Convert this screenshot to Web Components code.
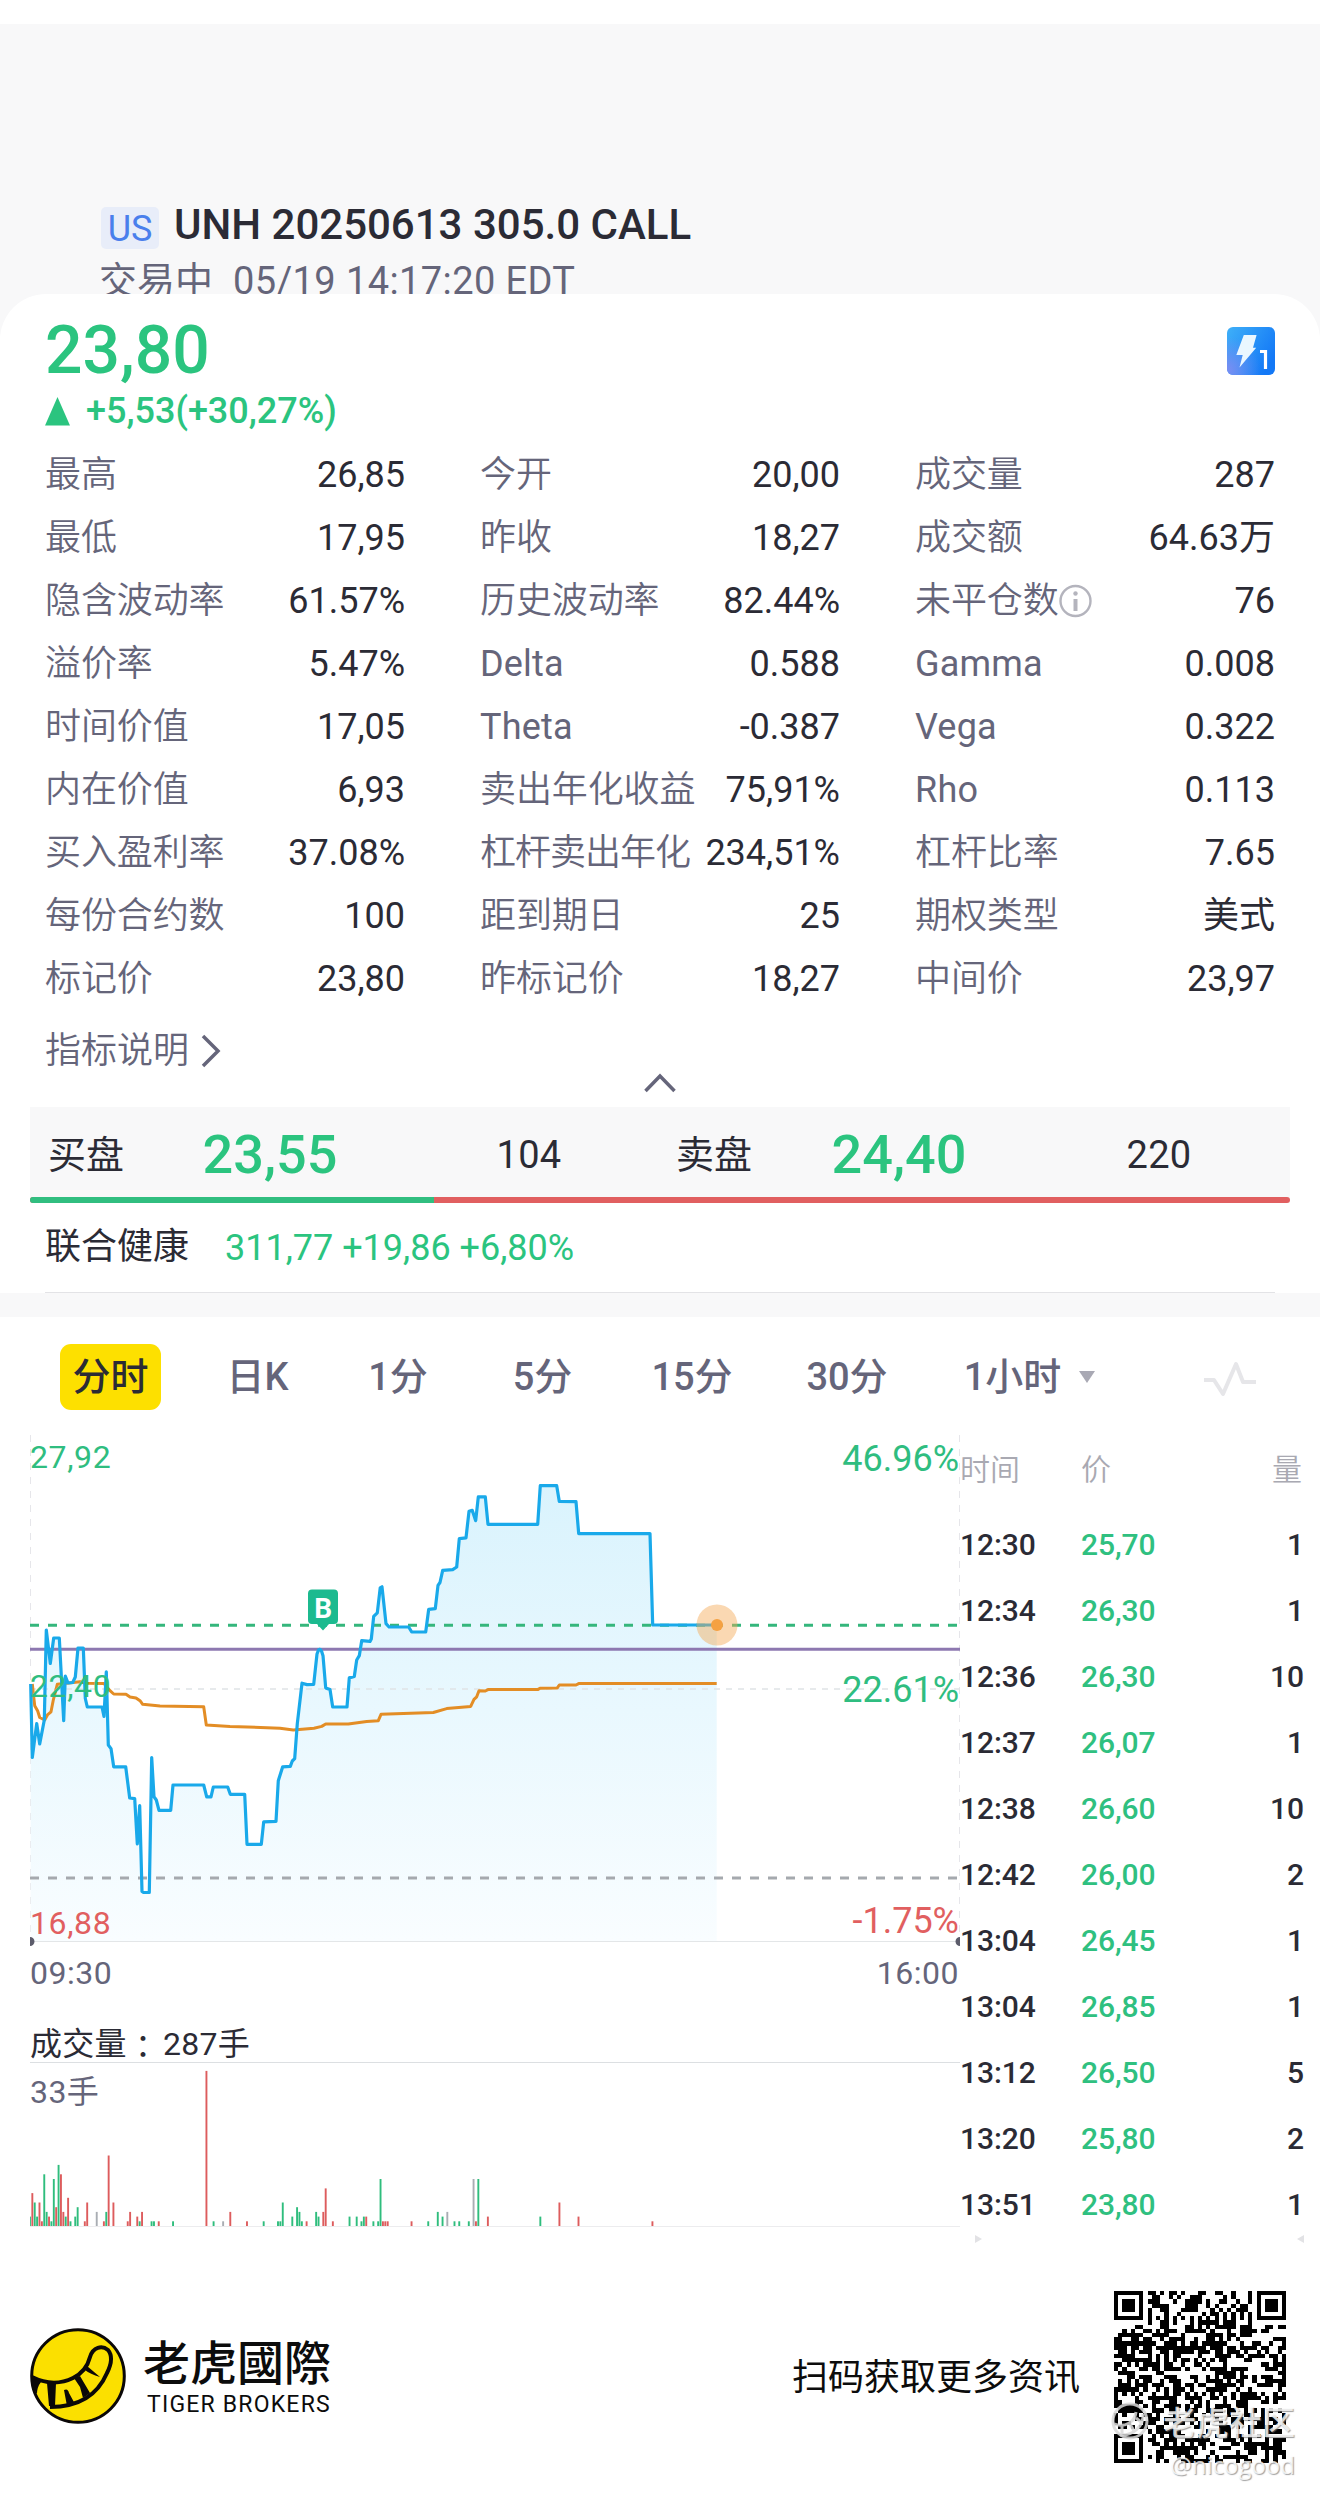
<!DOCTYPE html>
<html lang="zh-CN">
<head>
<meta charset="UTF-8">
<title>UNH 20250613 305.0 CALL</title>
<style>
    body {
        margin: 0;
        background: #fff;
        color: #2b2b35;
        font-family: Roboto, "Noto Sans CJK SC", sans-serif;
        --green: #2bc47f;
        --red: #e15f60;
        --muted: #65657a;
        --panel: #f8f8f9;
    }
</style>
</head>
<body>
<option-page>
    <contract-header slot="header" market="US" name="UNH 20250613 305.0 CALL" status="交易中" time="05/19 14:17:20 EDT"></contract-header>
    <quote-summary price="23,80" change="+5,53(+30,27%)"></quote-summary>
    <stat-grid></stat-grid>
    <bid-ask bid="23,55" bid-size="104" ask="24,40" ask-size="220"></bid-ask>
    <underlying-row name="联合健康">311,77 +19,86 +6,80%</underlying-row>
    <period-tabs></period-tabs>
    <market-board>
        <intraday-chart></intraday-chart>
        <volume-chart></volume-chart>
        <trade-tape slot="side"></trade-tape>
    </market-board>
    <brand-footer>扫码获取更多资讯</brand-footer>
</option-page>

<script>
// Small base class: every component renders a string into its shadow root
class BaseElement extends HTMLElement {
    constructor() {
        super();
        this.attachShadow({ mode: 'open' });
        this.shadowRoot.innerHTML = this.render();
    }
}

// Page shell
class OptionPage extends BaseElement {
    render() {
        return `
            <style>
                :host { display: flex; flex-direction: column; width: 1320px; height: 2496px; overflow: hidden; }
                .top { margin-top: 24px; background: var(--panel); }
                .card { height: 46px; margin-bottom: -46px; border-radius: 46px 46px 0 0; background: #fff; }
            </style>
            <div class="top">
                <slot name="header"></slot>
                <div class="card"></div>
            </div>
            <slot></slot>
        `;
    }
}

// Market badge, contract name and trading status
class ContractHeader extends BaseElement {
    render() {
        return `
            <style>
                :host { display: block; height: 270px; overflow: hidden; background: var(--panel); box-shadow: 0 46px 0 var(--panel); }
                .title { display: flex; align-items: center; gap: 15px; height: 50px; padding: 176px 0 0 101px; }
                .badge { width: 58px; height: 42px; margin-top: 6px; border-radius: 5px; background: #e8edf9; color: #4a7fec; font-size: 36px; line-height: 45px; text-align: center; }
                .name { font-size: 42px; font-weight: 500; line-height: 50px; }
                .status { display: flex; gap: 20px; margin-top: 6px; padding-left: 99px; font-size: 38px; line-height: 50px; color: var(--muted); }
                .status span + span { letter-spacing: 0.400px; }
            </style>
            <div class="title">
                <span class="badge">${this.getAttribute('market')}</span>
                <span class="name">${this.getAttribute('name')}</span>
            </div>
            <div class="status">
                <span>${this.getAttribute('status')}</span>
                <span>${this.getAttribute('time')}</span>
            </div>
        `;
    }
}

// Last price and daily change
class QuoteSummary extends BaseElement {
    render() {
        return `
            <style>
                :host { display: flex; justify-content: space-between; height: 148px; padding: 0 45px 0 45px; position: relative; color: var(--green); font-weight: 500; }
                .price { margin-top: 17px; font-size: 66px; line-height: 80px; }
                .change { display: flex; align-items: center; gap: 16px; height: 40px; font-size: 36px; }
                .flash { margin-top: 33px; }
            </style>
            <div>
                <div class="price">${this.getAttribute('price')}</div>
                <div class="change">
                    <svg width="25" height="29" viewBox="0 0 25 29"><path d="M12.5 0 25 28.500H0z" fill="#2bc47f"/></svg>
                    <span>${this.getAttribute('change')}</span>
                </div>
            </div>
            <svg class="flash" width="48" height="48" viewBox="0 0 48 48">
                <defs>
                    <linearGradient id="sky" x1="0" y1="0" x2="1" y2=".6">
                        <stop offset="0" stop-color="#3fb0f8"/>
                        <stop offset="1" stop-color="#1378f6"/>
                    </linearGradient>
                    <radialGradient id="violet" cx="0" cy=".9" r=".7">
                        <stop offset="0" stop-color="#7b8df2"/>
                        <stop offset="1" stop-color="#7b8df2" stop-opacity="0"/>
                    </radialGradient>
                </defs>
                <rect width="48" height="48" rx="6" fill="url(#sky)"/>
                <rect width="48" height="48" rx="6" fill="url(#violet)"/>
                <path d="M16.800 8H29.600L26 20.700h3.200L12.500 40.500 15.700 28H9.300z" fill="#eaf7ff"/>
                <path d="M33 24.500h5.500V42" fill="none" stroke="#fff" stroke-width="3.200"/>
            </svg>
        `;
    }
}

// One label / value pair; the info flag adds the round hint icon
class StatItem extends BaseElement {
    render() {
        const label = this.getAttribute('label');
        const info = this.hasAttribute('info')
            ? `<svg width="33" height="36" viewBox="0 0 33 36"><circle cx="16.500" cy="18" r="15" fill="none" stroke="#b4b4bd" stroke-width="2.400"/><path d="M16.500 16v12" stroke="#b4b4bd" stroke-width="4"/><circle cx="16.500" cy="10.500" r="2.200" fill="#b4b4bd"/></svg>`
            : '';
        return `
            <style>
                :host { display: flex; justify-content: space-between; align-items: center; height: 63px; font-size: 36px; line-height: 50px; white-space: nowrap; }
                .label { display: flex; align-items: center; color: var(--muted); font-weight: 350; letter-spacing: var(--label-spacing, -0.1px); }
                .latin { font-weight: 400; letter-spacing: 0.200px; }
            </style>
            <span class="label ${/^\w/.test(label) ? 'latin' : ''}">${label}${info}</span>
            <slot></slot>
        `;
    }
}

const STATS = [
    ['最高', '26,85'], ['今开', '20,00'], ['成交量', '287'],
    ['最低', '17,95'], ['昨收', '18,27'], ['成交额', '64.63万'],
    ['隐含波动率', '61.57%'], ['历史波动率', '82.44%'], ['未平仓数', '76', 'info'],
    ['溢价率', '5.47%'], ['Delta', '0.588'], ['Gamma', '0.008'],
    ['时间价值', '17,05'], ['Theta', '-0.387'], ['Vega', '0.322'],
    ['内在价值', '6,93'], ['卖出年化收益', '75,91%'], ['Rho', '0.113'],
    ['买入盈利率', '37.08%'], ['杠杆卖出年化', '234,51%', 'style="--label-spacing:-1px"'], ['杠杆比率', '7.65'],
    ['每份合约数', '100'], ['距到期日', '25'], ['期权类型', '美式', 'style="font-weight:380"'],
    ['标记价', '23,80'], ['昨标记价', '18,27'], ['中间价', '23,97']
];

class StatGrid extends BaseElement {
    render() {
        const items = STATS.map(([label, value, extra = '']) =>
            `<stat-item label="${label}" ${extra}>${value}</stat-item>`).join('');
        return `
            <style>
                :host { display: block; height: 665px; }
                .grid { display: grid; grid-template-columns: repeat(3, 360px); column-gap: 75px; padding: 1px 45px 0; }
                .more { display: flex; align-items: center; gap: 12px; height: 50px; margin: 16px 0 0 45px; font-size: 36px; line-height: 50px; color: var(--muted); font-weight: 350; }
                .fold { display: block; margin: -3px auto 0; }
            </style>
            <div class="grid">${items}</div>
            <div class="more">
                <span>指标说明</span>
                <svg width="20" height="34" viewBox="0 0 20 34"><path d="M2 2 17 17 2 32" fill="none" stroke="#65657a" stroke-width="3.500"/></svg>
            </div>
            <svg class="fold" width="32" height="20" viewBox="0 0 32 20"><path d="M1.500 18 16 3 30.500 18" fill="none" stroke="#65657a" stroke-width="3.500"/></svg>
        `;
    }
}

// Best bid / ask with the depth ratio line underneath
class BidAsk extends BaseElement {
    render() {
        const side = (label, price, size) => `
            <span class="label">${label}</span>
            <span class="price">${price}</span>
            <span>${size}</span>`;
        return `
            <style>
                :host { display: block; height: 96px; margin: 0 30px; background: var(--panel); }
                .row { display: grid; grid-template-columns: 110px 260px 258px 110px 262px 258px; align-items: center; box-sizing: border-box; height: 90px; padding-top: 5px; text-align: center; font-size: 38px; line-height: 56px; letter-spacing: 0.300px; }
                .label { padding-left: 18px; text-align: left; letter-spacing: 0; }
                .price { color: var(--green); font-size: 54px; font-weight: 500; letter-spacing: 0; }
                .ratio { display: flex; height: 6px; border-radius: 3px; overflow: hidden; background: var(--red); }
                .ratio i { width: 404px; background: #31be80; }
            </style>
            <div class="row">
                ${side('买盘', this.getAttribute('bid'), this.getAttribute('bid-size'))}
                ${side('卖盘', this.getAttribute('ask'), this.getAttribute('ask-size'))}
            </div>
            <div class="ratio"><i></i></div>
        `;
    }
}

class UnderlyingRow extends BaseElement {
    render() {
        return `
            <style>
                :host { display: block; border-bottom: 24px solid var(--panel); }
                .row { display: flex; align-items: center; gap: 36px; height: 89px; margin: 0 45px; border-bottom: 1px solid #e3e3e6; font-size: 36px; line-height: 50px; }
                .name { margin-top: -2px; }
                .quote { color: var(--green); }
            </style>
            <div class="row">
                <span class="name">${this.getAttribute('name')}</span>
                <span class="quote"><slot></slot></span>
            </div>
        `;
    }
}

// Chart period switcher
class PeriodTabs extends BaseElement {
    render() {
        const tabs = ['分时', '日K', '1分', '5分', '15分', '30分', '1小时'];
        return `
            <style>
                :host { display: grid; grid-template-columns: 101px 193px 88px 201px 98px 212px 119px 30px 1fr; align-items: center; height: 66px; padding: 27px 63px 22px 60px; font-size: 38px; font-weight: 500; line-height: 66px; text-align: center; color: var(--muted); white-space: nowrap; }
                .active { border-radius: 11px; background: #fde000; color: #2b2b35; }
                svg { justify-self: end; }
                svg:last-child { margin-top: 4px; }
            </style>
            ${tabs.map((tab, i) => `<span class="${i ? '' : 'active'}">${tab}</span>`).join('')}
            <svg width="23" height="12" viewBox="0 0 23 12"><path d="M0 0H16L8 12z" fill="#a9a9b4"/></svg>
            <svg width="54" height="38" viewBox="0 0 54 38"><path d="M1 20H11L20 34 33 4 40 22H53" fill="none" stroke="#e6e6e9" stroke-width="4" stroke-linejoin="round"/></svg>
        `;
    }
}

class MarketBoard extends BaseElement {
    render() {
        return `
            <style>
                :host { display: grid; grid-template-columns: 960px 1fr; height: 818px; }
            </style>
            <div><slot></slot></div>
            <slot name="side"></slot>
        `;
    }
}

// Price line, average line and reference levels, in drawing units of one pixel
const PRICE = '30.7,264 32.3,337.5 36.7,303.6 39.7,324 44.3,300 46.3,210 50.3,243.5 53.7,218 59.3,218 63.7,300.7 65.3,256 68,263 72.7,262.5 75.3,257 78,228 83.3,228 85.3,278.5 87.3,287 102,287 104,296.4 106.3,251.8 108.3,325 111,328.6 113.7,346.8 125.7,346.8 129.7,378 134.7,378.6 137.3,424 139.7,385.7 142,471.5 143.5,472.5 149.3,472.5 151.7,337.5 154,376.8 156.3,380 159,390.4 170.7,390.4 173,365 203.7,365 206.7,376.8 211,376.8 213.3,367 227.7,367 230.3,374.3 244.7,374.3 247,424.3 261.3,424.3 263.7,401.8 276,401.4 278.3,360.7 282.7,346.8 290.3,346.4 292.3,341 294.7,338.6 297.3,303.6 302,263.2 307,264.6 313.7,264.3 317,234 318.5,230 320,229.3 321.5,231 323,235.7 325.7,267.9 330,269.6 332.7,287 347,287 349.3,257.9 354.3,256.4 356.7,240 359.3,235.7 361.7,220.7 370,221.4 371.3,219 373.7,196.4 377.3,192.9 380.2,167.9 382,166.8 386,203.6 389,206.8 408.7,207 411.7,212 425.7,212 428.7,189.3 435.3,188.6 438,165.4 440,162.5 442.7,150.4 452.7,149.6 456.7,147 459.3,118.6 466,117.9 469,91.4 472.3,90.4 475.7,100.7 478.3,76.8 485.3,76.8 488,104.3 537.7,104.3 540.3,65.7 556.7,65.7 559.3,81.4 576,81.6 578.7,113.6 650,113.6 652.7,205 716.7,205';
const AVERAGE = '32.3,264 34.7,285.7 37.7,291 39.7,297.5 44.7,300 47.7,294.6 51,291.8 53.3,280 57.3,264.3 66.7,263.2 80,261.8 86.7,263.2 104,263.6 110,270.7 113.7,274 126,274.3 130,277 136,277.9 140,280.7 142.7,284.3 160,286 203.7,286.8 206.3,305 230,306.4 280,308.2 293.3,310 314,308.2 321.7,306.4 325.7,304 348.3,304 366.7,301.4 378.3,300.7 381,294.3 433.3,292.5 446.7,288.6 470.7,286.4 474,279.3 476.7,276.8 479,270.7 485.3,271 488,269.6 537.7,269.6 540,268.2 557.3,267.9 559.3,265 576,265 578.7,263.6 716.7,263.6';

class IntradayChart extends BaseElement {
    render() {
        return `
            <style>
                :host { display: block; height: 588px; }
                svg { display: block; margin-top: -12px; }
                text { font-size: 32px; fill: #2fbd80; letter-spacing: 0.600px; }
                .pct { font-size: 36px; text-anchor: end; letter-spacing: 0; }
                .down { fill: #e15f60; }
                .time { fill: var(--muted); letter-spacing: 0.500px; }
                .end { text-anchor: end; }
                .mark { font-size: 28px; font-weight: 700; fill: #fff; text-anchor: middle; }
            </style>
            <svg width="960" height="600" viewBox="0 0 960 600">
                <defs>
                    <linearGradient id="area" gradientUnits="userSpaceOnUse" x1="0" y1="60" x2="0" y2="521">
                        <stop offset="0" stop-color="#d9f3fd"/>
                        <stop offset="1" stop-color="#f9fdff"/>
                    </linearGradient>
                </defs>
                <path d="M30.500 15V521M959.500 15V521" stroke="#e6e6ea" stroke-dasharray="7 7"/>
                <polygon points="${PRICE} 716.700,521 30.700,521" fill="url(#area)"/>
                <path d="M30 521.500H960" stroke="#e3e6e8"/>
                <path d="M30 269H960" stroke="#dfe3e6" stroke-width="1.500" stroke-dasharray="6 6"/>
                <path d="M30 458H960" stroke="#a5a9ae" stroke-width="3" stroke-dasharray="9 9"/>
                <path d="M30 205.300H960" stroke="#35b67c" stroke-width="3" stroke-dasharray="9 9"/>
                <path d="M30 229.300H960" stroke="#8d78b0" stroke-width="3"/>
                <polyline points="${AVERAGE}" fill="none" stroke="#e38d25" stroke-width="3" stroke-linejoin="round"/>
                <polyline points="${PRICE}" fill="none" stroke="#19a9ea" stroke-width="3.200" stroke-linejoin="round"/>
                <path d="M30 517a4.500 4.500 0 0 1 0 9zM960 517a4.500 4.500 0 0 0 0 9z" fill="#5c5c6b"/>
                <circle cx="717" cy="205" r="20.500" fill="#f5a855" fill-opacity=".45"/>
                <circle cx="717" cy="205" r="6" fill="#f5a142"/>
                <path d="M312 169.500h22a4 4 0 0 1 4 4V200a4 4 0 0 1-4 4h-5l-6 6.500-6-6.500h-5a4 4 0 0 1-4-4V173.500a4 4 0 0 1 4-4z" fill="#1cba8f"/>
                <text class="mark" x="323.500" y="197.500">B</text>
                <text x="30" y="47.500">27,92</text>
                <text x="30" y="277">22,40</text>
                <text x="30" y="513.500" class="down">16,88</text>
                <text x="959" y="51" class="pct">46.96%</text>
                <text x="959" y="282" class="pct">22.61%</text>
                <text x="959" y="513" class="pct down">-1.75%</text>
                <text x="30" y="564" class="time">09:30</text>
                <text x="959" y="564" class="time end">16:00</text>
            </svg>
        `;
    }
}

// [minute since open, lots, r(ed) / g(reen) / n(eutral)]
const VOLUMES = [
    [0, 2, 'g'], [1, 7, 'r'], [2, 5, 'g'], [3, 2, 'g'], [4, 5, 'r'], [5, 1, 'r'], [6, 11, 'g'], [7, 3, 'g'],
    [8, 2, 'r'], [9, 1, 'g'], [10, 10, 'g'], [11, 4, 'r'], [12, 13, 'g'], [13, 11, 'r'], [14, 3, 'r'], [15, 2, 'g'],
    [16, 6, 'r'], [17, 1, 'g'], [19, 2, 'g'], [20, 4, 'g'], [23, 1, 'r'], [24, 5, 'r'], [28, 3, 'n'], [31, 1, 'r'],
    [32, 3, 'g'], [33, 15, 'r'], [35, 5, 'r'], [41, 1, 'r'], [42, 3, 'r'], [45, 2, 'r'], [46, 1, 'g'], [47, 3, 'r'],
    [51, 1, 'g'], [52, 1, 'g'], [54, 1, 'r'], [60, 1, 'g'], [74, 33, 'r'], [77, 1, 'g'], [81, 1, 'n'], [84, 3, 'r'],
    [91, 1, 'r'], [98, 1, 'g'], [104, 1, 'g'], [105, 1, 'g'], [106, 5, 'g'], [110, 2, 'g'], [112, 4, 'g'], [113, 3, 'g'],
    [114, 1, 'g'], [116, 1, 'r'], [120, 3, 'g'], [121, 2, 'g'], [123, 3, 'r'], [124, 8, 'r'], [127, 1, 'r'], [134, 2, 'g'],
    [137, 2, 'g'], [139, 1, 'g'], [140, 2, 'g'], [141, 2, 'r'], [144, 1, 'g'], [146, 1, 'g'], [147, 10, 'g'], [148, 1, 'r'],
    [149, 1, 'r'], [150, 1, 'r'], [160, 1, 'r'], [167, 1, 'g'], [171, 3, 'g'], [173, 2, 'g'], [175, 3, 'n'], [178, 1, 'g'],
    [180, 1, 'g'], [184, 1, 'g'], [186, 10, 'n'], [187, 1, 'r'], [188, 10, 'g'], [192, 2, 'r'], [214, 2, 'g'], [222, 5, 'r'],
    [230, 2, 'r'], [261, 1, 'r']
];

class VolumeChart extends BaseElement {
    render() {
        const colors = { r: '#dd5c5d', g: '#2fbd7d', n: '#a9adb3' };
        const bars = VOLUMES.map(([minute, lots, kind]) => {
            const h = lots * 4.7;
            return `<rect x="${(minute * 2.385 - 1).toFixed(2)}" y="${(164 - h).toFixed(1)}" width="1.9" height="${h.toFixed(1)}" fill="${colors[kind]}"/>`;
        }).join('');
        return `
            <style>
                :host { display: block; padding-left: 30px; }
                .total { display: flex; height: 39px; line-height: 42px; padding-top: 15px; font-size: 32px; letter-spacing: 0.300px; }
                .total i { width: 36px; font-style: normal; font-family: "Noto Sans CJK TC", sans-serif; }
                svg { display: block; }
                text { font-size: 32px; fill: var(--muted); letter-spacing: 0.400px; }
            </style>
            <div class="total"><span>成交量</span><i lang="zh-TW">：</i><span>287手</span></div>
            <svg width="930" height="166" viewBox="0 0 930 166">
                <path d="M0 .500H930" stroke="#dcdfe2"/>
                <path d="M0 164.500H930" stroke="#ececee"/>
                ${bars}
                <text x="0" y="41">33手</text>
            </svg>
        `;
    }
}

const TRADES = [
    ['12:30', '25,70', 1], ['12:34', '26,30', 1], ['12:36', '26,30', 10], ['12:37', '26,07', 1],
    ['12:38', '26,60', 10], ['12:42', '26,00', 2], ['13:04', '26,45', 1], ['13:04', '26,85', 1],
    ['13:12', '26,50', 5], ['13:20', '25,80', 2], ['13:51', '23,80', 1]
];

// Time and sales list
class TradeTape extends BaseElement {
    render() {
        const rows = TRADES.map(([time, price, size]) =>
            `<div class="row"><span>${time}</span><span class="price">${price}</span><span class="size">${size}</span></div>`).join('');
        return `
            <style>
                :host { display: block; padding: 0 16px 0 0; font-size: 30px; }
                .row { display: grid; grid-template-columns: 121px 1fr auto; align-items: center; height: 66px; font-weight: 500; letter-spacing: -0.100px; }
                .head { height: 75px; margin-right: 2px; padding-bottom: 5px; box-sizing: border-box; margin-bottom: 4px; font-weight: 350; color: #a9a9b2; }
                .price { color: #2fc080; }
                .ends { display: flex; justify-content: space-between; margin: -2px 0 0 15px; }
            </style>
            <div class="row head"><span>时间</span><span>价</span><span>量</span></div>
            ${rows}
            <div class="ends">
                <svg width="7" height="8" viewBox="0 0 7 8"><path d="M0 0 7 4 0 8z" fill="#e2e2e5"/></svg>
                <svg width="7" height="8" viewBox="0 0 7 8"><path d="M7 0 0 4 7 8z" fill="#e2e2e5"/></svg>
            </div>
        `;
    }
}

// 41 x 41 module code with finder, timing and alignment patterns
class QrCode extends BaseElement {
    render() {
        const n = 41;
        let seed = 20250519;
        const next = () => (seed = (seed * 1103515245 + 12345) % 2147483648) / 2147483648;
        const ring = (x, y, cx, cy, max) => {
            const d = Math.max(Math.abs(x - cx), Math.abs(y - cy));
            if (d > max) return null;
            return max === 2 ? d !== 1 : d !== 2 && d !== 4;
        };
        let d = '';
        for (let y = 0; y < n; y++) {
            for (let x = 0; x < n; x++) {
                let on = next() > 0.47;
                if (x === 6 || y === 6) on = (x + y) % 2 === 0;
                for (const [cx, cy, max] of [[3, 3, 4], [37, 3, 4], [3, 37, 4], [34, 34, 2]]) {
                    const cell = ring(x, y, cx, cy, max);
                    if (cell !== null) on = cell;
                }
                if (on) d += `M${x} ${y}h1v1h-1z`;
            }
        }
        return `
            <style>:host { display: block; width: 172px; height: 172px; } svg { display: block; }</style>
            <svg width="172" height="172" viewBox="0 0 41 41" shape-rendering="crispEdges"><path d="${d}"/></svg>
        `;
    }
}

// Community stamp laid over the code
class CommunityMark extends BaseElement {
    render() {
        return `
            <style>
                :host { display: flex; flex-direction: column; align-items: flex-end; color: rgba(255, 255, 255, .8); text-shadow: 1px 1px 1px rgba(120, 120, 120, .7); white-space: nowrap; }
                .line { display: flex; align-items: center; gap: 14px; height: 50px; font-size: 33px; font-weight: 500; }
                .user { font-size: 24px; line-height: 38px; font-family: "Open Sans", sans-serif; }
            </style>
            <div class="line">
                <svg width="38" height="38" viewBox="0 0 38 38" fill="none" stroke="#d8d8d8" stroke-opacity=".85" stroke-width="3">
                    <circle cx="19" cy="19" r="17"/>
                    <path d="M3 22C14 26 24 20 25 10M9 33C22 34 33 24 32 12M11 24v8M19 22l4 7M25 16l5 4"/>
                </svg>
                <span>老虎社区</span>
            </div>
            <div class="user">@nicogood</div>
        `;
    }
}

class BrandFooter extends BaseElement {
    render() {
        return `
            <style>
                :host { display: flex; align-items: center; height: 172px; margin-top: 41px; padding: 0 34px 0 30px; color: #0c0c0c; }
                .names { display: flex; flex-direction: column; margin: -3px auto 0 17px; }
                .cn { height: 54px; font-family: "Noto Sans CJK TC", sans-serif; font-size: 47px; font-weight: 500; line-height: 54px; }
                .en { margin: 4px 0 0 4px; font-size: 23px; line-height: 28px; letter-spacing: 1.200px; }
                .hint { margin: -7px 34px 0 0; font-size: 36px; }
                .code { position: relative; }
                .logo { margin-top: -2px; }
                community-mark { position: absolute; right: -9px; top: 105px; }
            </style>
            <svg class="logo" width="96" height="96" viewBox="0 0 96 96">
                <circle cx="48" cy="48" r="46.300" fill="#fbe000" stroke="#0b0808" stroke-width="3"/>
                <path d="M2 49C16 56 31 56 43 50 53 45 58 37 60 29 63 19 72 17 78 22 83 28 81 37 77 45 68 66 50 79 20 79" fill="none" stroke="#0b0808" stroke-width="4"/>
                <path d="M1 49 11 54Q7 59 7 66L3 60zM17 55H26L25 78H19zM34 62Q38 60 39 65L45 76 37 78zM44 50 50 48 60 65 53 70 50 59zM55 42 57 38 70 49Q60 46 55 42z" fill="#0b0808"/>
            </svg>
            <div class="names">
                <span class="cn">老虎國際</span>
                <span class="en">TIGER BROKERS</span>
            </div>
            <span class="hint"><slot></slot></span>
            <div class="code">
                <qr-code></qr-code>
                <community-mark></community-mark>
            </div>
        `;
    }
}

customElements.define('option-page', OptionPage);
customElements.define('contract-header', ContractHeader);
customElements.define('quote-summary', QuoteSummary);
customElements.define('stat-item', StatItem);
customElements.define('stat-grid', StatGrid);
customElements.define('bid-ask', BidAsk);
customElements.define('underlying-row', UnderlyingRow);
customElements.define('period-tabs', PeriodTabs);
customElements.define('market-board', MarketBoard);
customElements.define('intraday-chart', IntradayChart);
customElements.define('volume-chart', VolumeChart);
customElements.define('trade-tape', TradeTape);
customElements.define('qr-code', QrCode);
customElements.define('community-mark', CommunityMark);
customElements.define('brand-footer', BrandFooter);
</script>
</body>
</html>
